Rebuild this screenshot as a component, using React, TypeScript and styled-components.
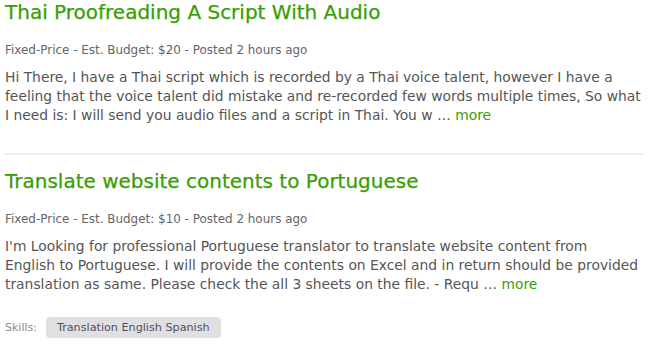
import React from "react";
import styled, { createGlobalStyle } from "styled-components";

const Global = createGlobalStyle`
  html, body { margin: 0; padding: 0; background: #ffffff; }
  body { font-family: "DejaVu Sans", "Open Sans", sans-serif; }
`;

const Page = styled.div`
  width: 650px;
  height: 344px;
  overflow: hidden;
  padding: 0 7px 0 5px;
  box-sizing: border-box;
  display: flex;
  flex-direction: column;
`;

const Job = styled.section<{ $divider?: boolean }>`
  display: flex;
  flex-direction: column;
  padding-bottom: 28px;
  border-bottom: ${(p) => (p.$divider ? "2px solid #f0f0f0" : "none")};
  margin-bottom: ${(p) => (p.$divider ? "14px" : "0")};
`;

const Title = styled.h2`
  margin: 0;
  font-size: 20px;
  line-height: 24px;
  font-weight: 400;
  color: #37a000;
  -webkit-text-stroke: 0.25px #37a000;
`;

const Meta = styled.div`
  margin-top: 18px;
  font-size: 11.95px;
  line-height: 16px;
  color: #656565;
`;

const Desc = styled.p`
  margin: 10px 0 0;
  font-size: 13.85px;
  line-height: 19px;
  color: #555555;
  white-space: nowrap;
`;

const More = styled.a`
  color: #37a000;
  text-decoration: none;
`;

const Skills = styled.div`
  display: flex;
  align-items: center;
  gap: 9px;
  margin-top: 23px;
`;

const SkillsLabel = styled.span`
  font-size: 11px;
  color: #8a8a8a;
`;

const Chip = styled.span`
  background: #e0e0e0;
  border-radius: 4px;
  padding: 3px 11px;
  font-size: 11.2px;
  line-height: 15px;
  color: #505060;
`;

export default function App() {
  return (
    <>
      <Global />
      <Page>
        <Job $divider>
          <Title>Thai Proofreading A Script With Audio</Title>
          <Meta>Fixed-Price - Est. Budget: $20 - Posted 2 hours ago</Meta>
          <Desc>
            Hi There, I have a Thai script which is recorded by a Thai voice talent, however I have a
            <br />
            feeling that the voice talent did mistake and re-recorded few words multiple times, So what
            <br />
            I need is: I will send you audio files and a script in Thai. You w … <More>more</More>
          </Desc>
        </Job>
        <Job>
          <Title>Translate website contents to Portuguese</Title>
          <Meta>Fixed-Price - Est. Budget: $10 - Posted 2 hours ago</Meta>
          <Desc>
            I'm Looking for professional Portuguese translator to translate website content from
            <br />
            English to Portuguese. I will provide the contents on Excel and in return should be provided
            <br />
            translation as same. Please check the all 3 sheets on the file. - Requ … <More>more</More>
          </Desc>
          <Skills>
            <SkillsLabel>Skills:</SkillsLabel>
            <Chip>Translation English Spanish</Chip>
          </Skills>
        </Job>
      </Page>
    </>
  );
}
